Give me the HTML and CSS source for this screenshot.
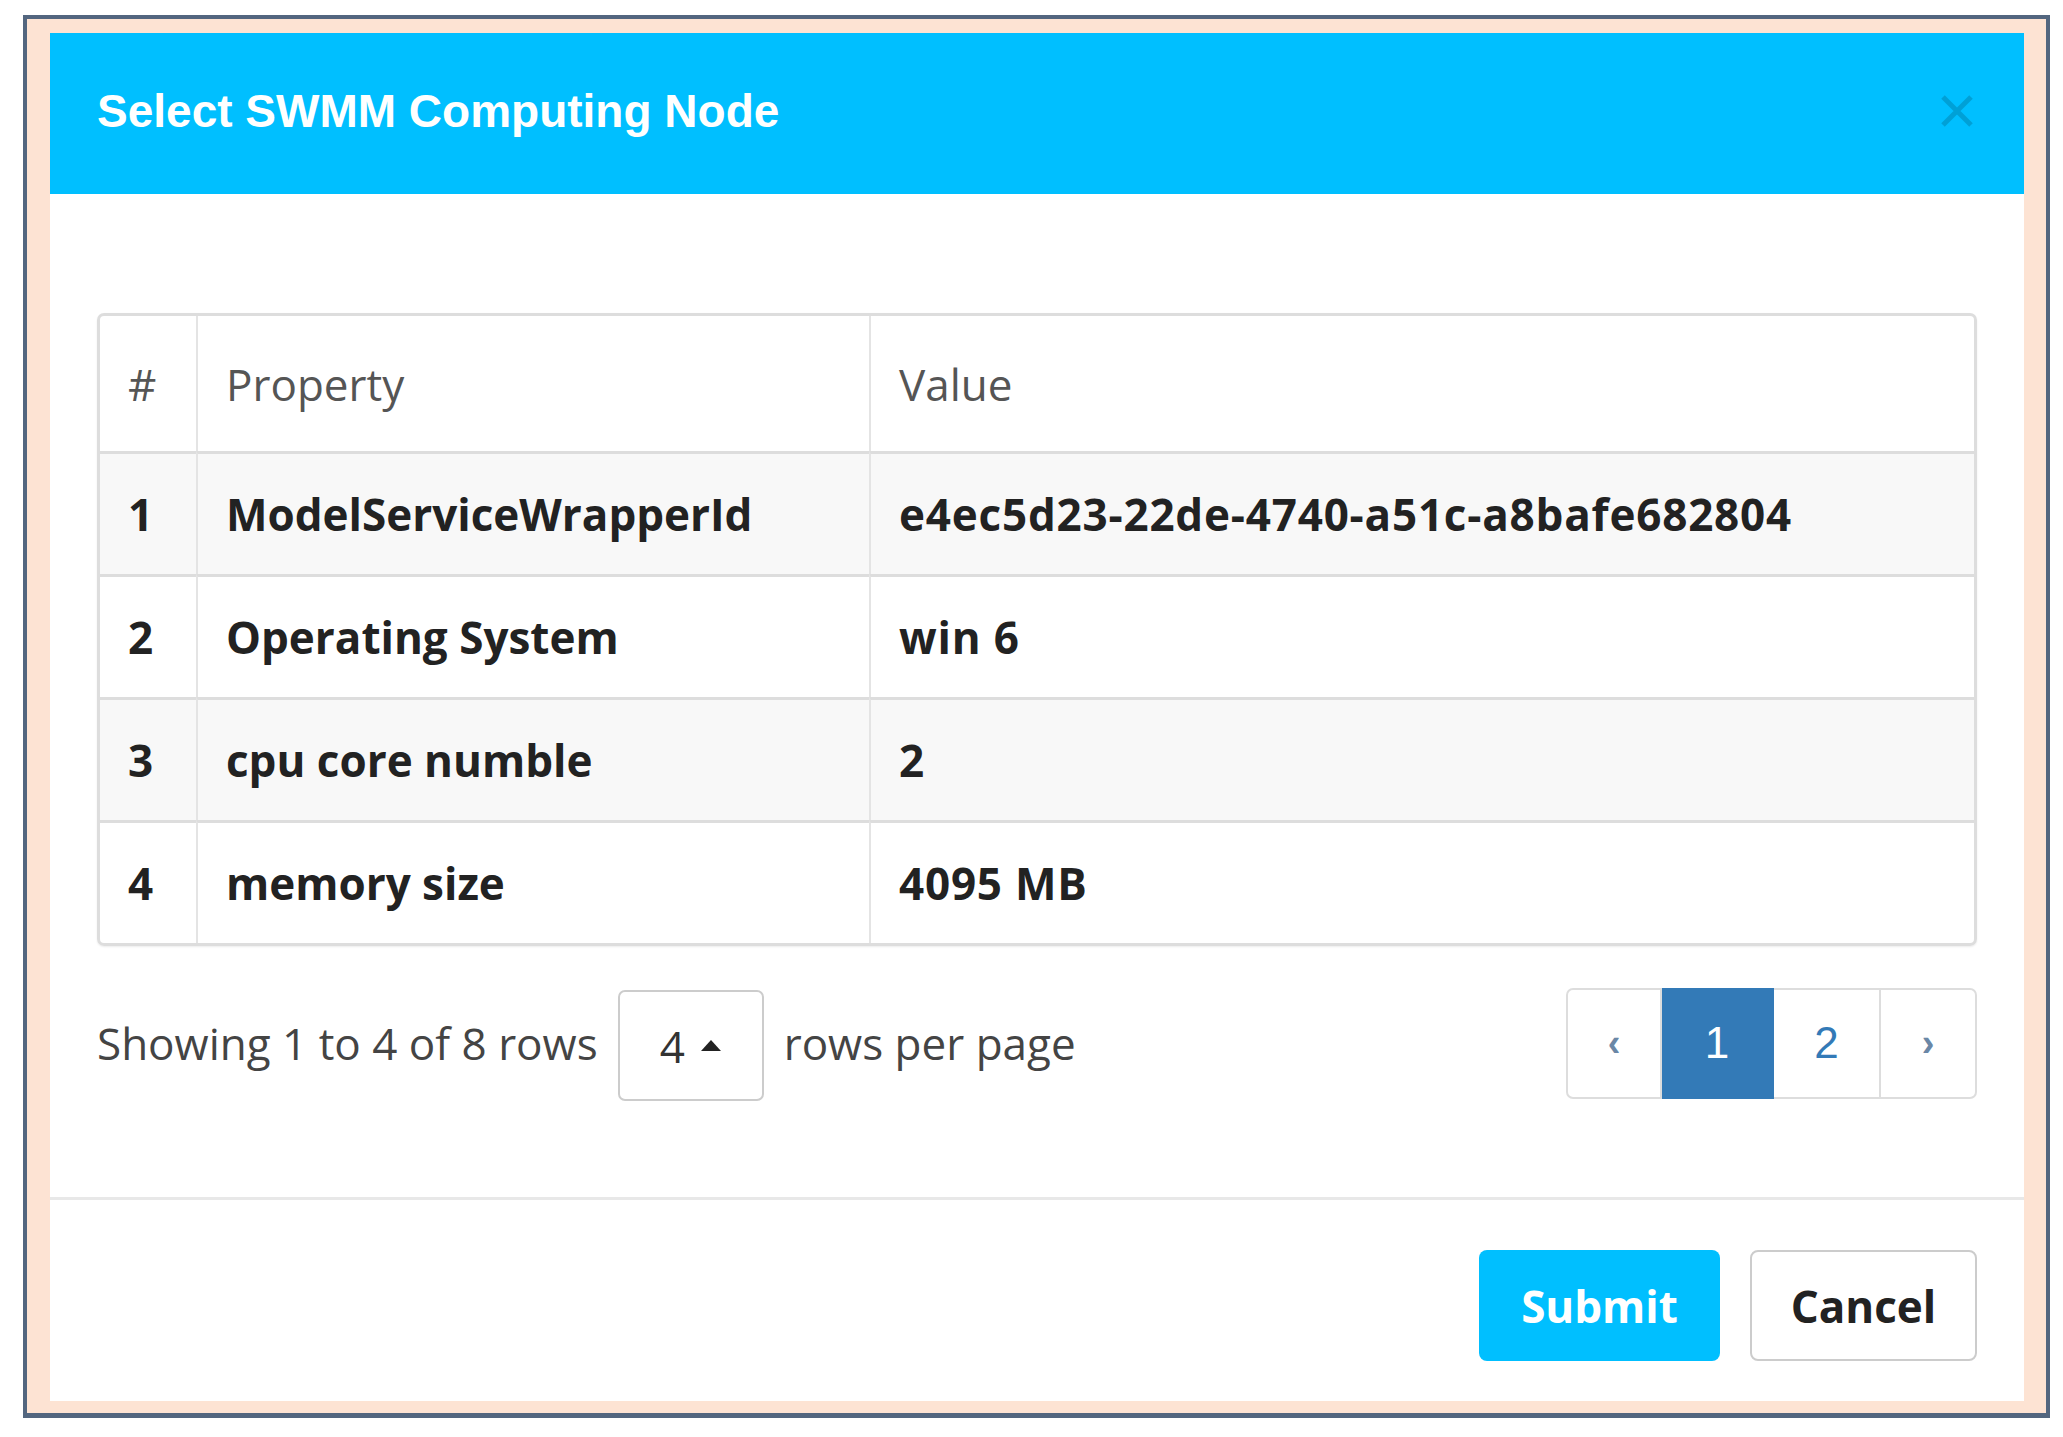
FILE: index.html
```html
<!DOCTYPE html>
<html lang="en">
<head>
    <meta charset="UTF-8">
    <meta name="viewport" content="width=device-width, initial-scale=1.0">
    <title>Select SWMM Computing Node</title>

    <link rel="stylesheet" href="styles.css">
</head>

<body>

<div class="frame">
    <div class="modal">
        <div class="modal-header">
            <h1>Select SWMM Computing Node</h1>
            <button class="close" type="button" aria-label="Close">
                <svg width="34" height="34" viewBox="0 0 34 34">
                    <path d="M3 3 L31 31 M31 3 L3 31" stroke="currentColor" stroke-width="5" />
                </svg>
            </button>
        </div>

        <div class="modal-body">
            <div class="table-wrap">
                <table class="node-table">
                    <thead>
                        <tr>
                            <th class="num">#</th>
                            <th class="prop">Property</th>
                            <th>Value</th>
                        </tr>
                    </thead>
                    <tbody>
                        <tr>
                            <td class="num">1</td>
                            <td>ModelServiceWrapperId</td>
                            <td class="val">e4ec5d23-22de-4740-a51c-a8bafe682804</td>
                        </tr>
                        <tr>
                            <td class="num">2</td>
                            <td>Operating System</td>
                            <td class="val">win 6</td>
                        </tr>
                        <tr>
                            <td class="num">3</td>
                            <td>cpu core numble</td>
                            <td class="val">2</td>
                        </tr>
                        <tr>
                            <td class="num">4</td>
                            <td>memory size</td>
                            <td class="val">4095 MB</td>
                        </tr>
                    </tbody>
                </table>
            </div>

            <div class="table-footer">
                <div class="page-info">
                    <span>Showing 1 to 4 of 8 rows</span>
                    <span class="page-size">4 <span class="caret"></span></span>
                    <span>rows per page</span>
                </div>
                <ul class="pagination">
                    <li class="arrow">&lsaquo;</li>
                    <li class="active">1</li>
                    <li>2</li>
                    <li class="arrow">&rsaquo;</li>
                </ul>
            </div>
        </div>

        <div class="modal-footer">
            <button class="btn btn-submit" type="button">Submit</button>
            <button class="btn btn-cancel" type="button">Cancel</button>
        </div>
    </div>
</div>

</body>
</html>
```

FILE: styles.css
```css
/* page: plain white around the framed dialog */
body {
    margin: 0;
    background: #ffffff;
    font-family: "Open Sans", "Liberation Sans", sans-serif;
}

/* dark outer border with the peach band inside it */
.frame {
    box-sizing: border-box;
    width: 2027px;
    height: 1403px;
    margin: 15px 0 0 23px;
    padding: 14px 22px 12px 23px;
    background: #fde3d3;
    border: 4px solid #53667f;
    border-bottom-width: 5px;
}

.modal {
    display: flex;
    flex-direction: column;
    height: 100%;
    background: #ffffff;
}

/* blue title bar */
.modal-header {
    display: flex;
    align-items: center;
    justify-content: space-between;
    height: 161px;
    padding: 0 50px 6px 47px;
    box-sizing: border-box;
    background: #00bfff;
}

.modal-header h1 {
    margin: 0;
    color: #ffffff;
    font-family: "Liberation Sans", Arial, sans-serif;
    font-size: 46px;
    font-weight: bold;
}

.close {
    padding: 0;
    border: none;
    background: none;
    color: rgba(0, 0, 0, 0.16);
    line-height: 0;
}

.modal-body {
    flex: 1;
    padding: 119px 47px 0 47px;
}

/* the property table */
.table-wrap {
    border: 3px solid #dddddd;
    border-radius: 7px;
    overflow: hidden;
    box-shadow: 0 1px 2px rgba(0, 0, 0, 0.08);
}

.node-table {
    width: 100%;
    border-collapse: separate;
    border-spacing: 0;
    font-size: 44px;
}

.node-table th,
.node-table td {
    box-sizing: border-box;
    padding: 0 28px;
    text-align: left;
    vertical-align: middle;
    border-left: 2px solid #e4e4e4;
}

.node-table th:first-child,
.node-table td:first-child {
    border-left: none;
}

.node-table th {
    height: 135px;
    color: #555555;
    font-weight: normal;
}

.node-table td {
    height: 123px;
    color: #222222;
    font-weight: bold;
    border-top: 3px solid #dddddd;
}

.node-table td.val {
    letter-spacing: 0.8px;
}

.node-table tbody tr:nth-child(odd) td {
    background: #f8f8f8;
}

.node-table .num {
    width: 96px;
}

.node-table .prop {
    width: 673px;
}

/* rows-per-page and page links under the table */
.table-footer {
    display: flex;
    align-items: center;
    justify-content: space-between;
    margin-top: 39px;
}

.page-info {
    display: flex;
    align-items: center;
    gap: 20px;
    color: #444444;
    font-size: 44px;
}

.page-size {
    display: flex;
    align-items: center;
    box-sizing: border-box;
    width: 146px;
    height: 111px;
    margin-top: 5px;
    padding-left: 40px;
    border: 2px solid #cccccc;
    border-radius: 7px;
    color: #333333;
}

.caret {
    width: 0;
    height: 0;
    margin-left: 16px;
    border-left: 10px solid transparent;
    border-right: 10px solid transparent;
    border-bottom: 11px solid #222222;
}

.pagination {
    display: flex;
    margin: 0;
    padding: 0;
    list-style: none;
    font-family: "Liberation Sans", Arial, sans-serif;
    font-size: 44px;
}

.pagination li {
    display: flex;
    align-items: center;
    justify-content: center;
    box-sizing: border-box;
    width: 107px;
    height: 111px;
    color: #337ab7;
    border: 2px solid #dddddd;
    border-left: none;
}

.pagination li:first-child {
    border-left: 2px solid #dddddd;
    border-radius: 7px 0 0 7px;
}

.pagination li:last-child {
    border-radius: 0 7px 7px 0;
}

.pagination .arrow {
    width: 96px;
    color: #6a87a6;
    font-size: 38px;
    font-weight: bold;
}

.pagination .active {
    width: 112px;
    color: #ffffff;
    background: #337ab7;
    border-color: #337ab7;
}

/* footer with the two buttons */
.modal-footer {
    display: flex;
    justify-content: flex-end;
    gap: 30px;
    padding: 50px 47px 40px 0;
    border-top: 3px solid #e8e8e8;
}

.btn {
    box-sizing: border-box;
    height: 111px;
    border-radius: 8px;
    font-family: "Open Sans", sans-serif;
    font-size: 44px;
    font-weight: bold;
}

.btn-submit {
    width: 241px;
    color: #ffffff;
    background: #00bfff;
    border: none;
}

.btn-cancel {
    width: 227px;
    color: #222222;
    background: #ffffff;
    border: 2px solid #cccccc;
}
```
